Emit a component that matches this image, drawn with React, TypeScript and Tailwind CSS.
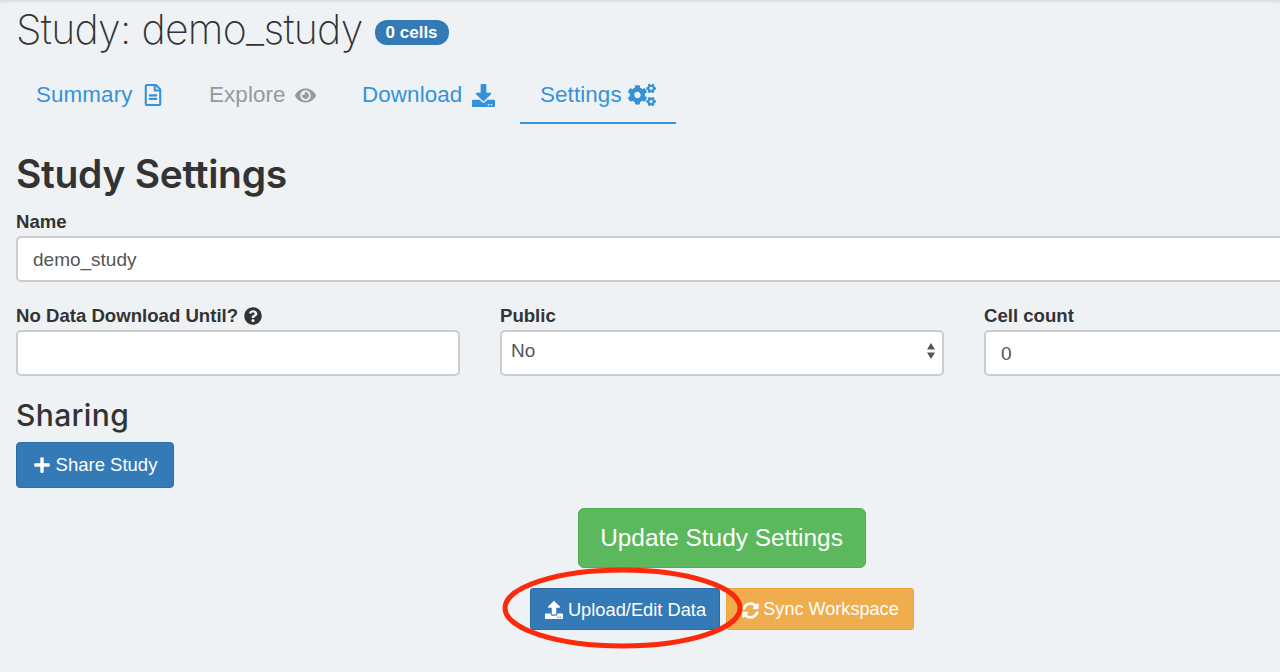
import React from 'react';
import { FaDownload, FaEye, FaPlus, FaQuestionCircle, FaRegFileAlt, FaSyncAlt, FaUpload, FaCogs } from 'react-icons/fa';

const fieldClass =
  'h-[46px] w-full rounded-[5px] border-2 border-[#ccc] bg-white px-[15px] pt-[2px] text-[19px] text-[#555] outline-none';

const tabs = [
  { label: 'Summary', icon: <FaRegFileAlt size={22} />, color: 'text-[#3592d8]', cell: 'w-[173px] gap-[9px]' },
  { label: 'Explore', icon: <FaEye size={21} />, color: 'text-[#999]', cell: 'w-[153px] gap-[9px]' },
  { label: 'Download', icon: <FaDownload size={23} />, color: 'text-[#3592d8]', cell: 'w-[178px] gap-[10px]' },
  { label: 'Settings', icon: <FaCogs size={28} />, color: 'text-[#3592d8] border-b-2 border-[#3592d8]', cell: 'w-[156px] gap-[6px]' },
];

const App: React.FC = () => {
  return (
    <div className="relative h-[672px] w-[1280px] overflow-hidden bg-[#eef2f5] font-['Liberation_Sans',Arial,sans-serif] text-[#333] shadow-[inset_0_4px_4px_-3px_rgba(0,0,0,0.12)]">
      <div className="w-[1440px] pl-4">
        {/* タイトル */}
        <div className="flex h-[62px] items-center pb-[2px]">
          <h1 className="font-['Inter',sans-serif] text-[41px] font-extralight tracking-[-0.7px] text-[#333]">Study: demo_study</h1>
          <span className="ml-[12px] mt-[5px] rounded-[12px] bg-[#337ab7] px-[11px] py-[3px] text-[17px] leading-[19px] font-bold text-white">0 cells</span>
        </div>

        {/* タブ */}
        <nav className="flex h-[62px] items-start">
          {tabs.map((tab) => (
            <div key={tab.label} className={`flex h-[62px] items-start pl-[20px] pt-[19px] ${tab.color} ${tab.cell}`}>
              <span className="text-[22.4px] leading-[28px] tracking-[0.1px]">{tab.label}</span>
              <span className="flex h-[28px] items-center">{tab.icon}</span>
            </div>
          ))}
        </nav>

        <h2 className="mt-[24px] font-['Inter',sans-serif] text-[39px] leading-[52px] font-semibold tracking-[-0.3px]">Study Settings</h2>

        <label className="mt-[12px] block text-[18.6px] leading-[20px] font-bold">Name</label>
        <input readOnly value="demo_study" className={`${fieldClass} mt-[4px] block`} />

        {/* 3カラムのフォーム */}
        <div className="mt-[23px] grid grid-cols-[444px_444px_444px] gap-x-[40px]">
          <div>
            <label className="flex items-center gap-[6px] text-[18.6px] leading-[22px] font-bold">
              No Data Download Until? <FaQuestionCircle size={18} />
            </label>
            <input readOnly className={`${fieldClass} mt-[3px] block`} />
          </div>
          <div>
            <label className="block text-[18.6px] leading-[22px] font-bold">Public</label>
            <div className={`${fieldClass} relative mt-[3px] flex items-center !px-[9px] !pt-0 pb-[3px]`}>
              No
              <svg className="absolute right-[6px] top-[11px]" width="10" height="16" viewBox="0 0 10 16">
                <path d="M5 0l4 6.5H1zM5 16l-4-6.5h8z" fill="#555" />
              </svg>
            </div>
          </div>
          <div>
            <label className="block text-[18.6px] leading-[22px] font-bold">Cell count</label>
            <input readOnly value="0" className={`${fieldClass} mt-[3px] block`} />
          </div>
        </div>

        <h3 className="mt-[16px] font-['Inter',sans-serif] text-[30px] leading-[46px] font-medium tracking-[0.35px]">Sharing</h3>
        <button className="mt-[4px] flex h-[46px] w-[158px] items-center justify-center gap-[5px] rounded-[4px] border border-[#2e6da4] bg-[#337ab7] text-[18.5px] text-white">
          <FaPlus size={18} /> Share Study
        </button>

        {/* 下部ボタン */}
        <div className="w-[1280px] -translate-x-4">
          <div className="mt-[20px] flex justify-center">
            <button className="ml-[163px] h-[60px] w-[288px] rounded-[6px] border border-[#4cae4c] bg-[#5cb85c] text-[24.4px] text-white">
              Update Study Settings
            </button>
          </div>
          <div className="mt-[20px] flex pl-[530px]">
            <button className="flex h-[42px] w-[190px] items-center justify-center gap-[5px] rounded-[3px] border border-[#2e6da4] bg-[#337ab7] pt-[1px] pl-[1px] text-[18.3px] text-white">
              <FaUpload size={18} /> Upload/Edit Data
            </button>
            <button className="ml-[6px] flex h-[42px] w-[188px] items-center justify-center gap-[4px] rounded-[3px] border border-[#eea236] bg-[#f0ad4e] pt-[2px] pl-[1px] text-[18.1px] text-white">
              <FaSyncAlt size={17} /> Sync Workspace
            </button>
          </div>
        </div>
      </div>

      {/* 赤い丸囲み */}
      <svg className="absolute left-[495px] top-[560px]" width="270" height="96" viewBox="0 0 270 96">
        <ellipse cx="127.5" cy="48" rx="117.5" ry="38" fill="none" stroke="#fb2a0b" strokeWidth="5" />
      </svg>
    </div>
  );
};

export default App;
